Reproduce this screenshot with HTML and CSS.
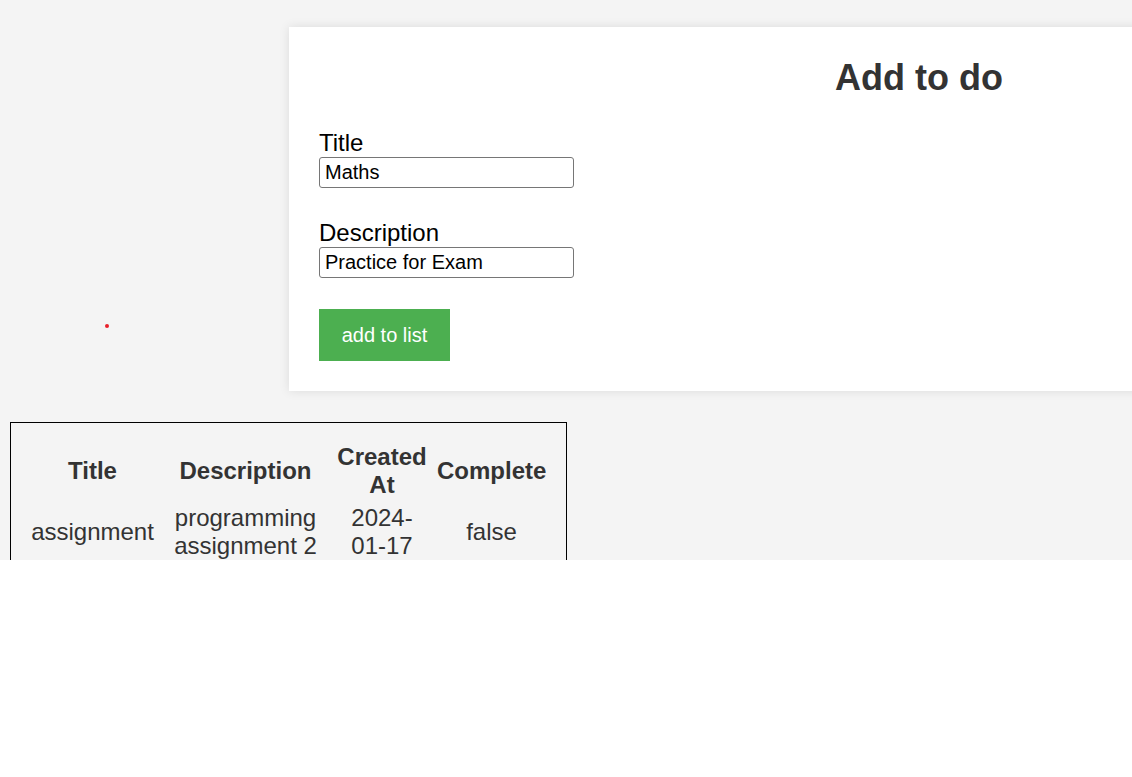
FILE: index.html
```html
<!DOCTYPE html>
<html lang="en">
<head>
<meta charset="utf-8">
<title>Todo</title>
<link rel="stylesheet" href="styles.css">
</head>
<body>
<div class="app">
  <div class="top-row">
    <div class="side">
      <div class="dot"></div>
    </div>
    <div class="card">
      <h1 class="card-title">Add to do</h1>
      <div class="field">
        <label class="field-label" for="title">Title</label>
        <input class="field-input" id="title" type="text" value="Maths">
      </div>
      <div class="field">
        <label class="field-label" for="desc">Description</label>
        <input class="field-input" id="desc" type="text" value="Practice for Exam">
      </div>
      <button class="add-btn" type="button">add to list</button>
    </div>
  </div>
  <table class="todo-table">
    <colgroup>
      <col class="c-title">
      <col class="c-desc">
      <col class="c-created">
      <col class="c-complete">
    </colgroup>
    <thead>
      <tr>
        <th>Title</th>
        <th>Description</th>
        <th>Created At</th>
        <th>Complete</th>
      </tr>
    </thead>
    <tbody>
      <tr>
        <td>assignment</td>
        <td>programming assignment 2</td>
        <td>2024-01-17</td>
        <td>false</td>
      </tr>
    </tbody>
  </table>
</div>
</body>
</html>
```
FILE: styles.css
```css
html, body {
  margin: 0;
  padding: 0;
  background: #ffffff;
}

body {
  font-family: "Liberation Sans", Arial, sans-serif;
}

.app {
  height: 560px;
  overflow: hidden;
  background: #f4f4f4;
  padding: 27px 0 0 10px;
  box-sizing: border-box;
}

.top-row {
  display: flex;
  align-items: flex-start;
}

.side {
  flex: 0 0 279px;
}

.dot {
  width: 4px;
  height: 4px;
  border-radius: 50%;
  background: #e8202a;
  margin: 297px 0 0 95px;
}

.card {
  flex: 0 0 1260px;
  box-sizing: border-box;
  background: #ffffff;
  padding: 30px;
  box-shadow: 0 0 10px rgba(0, 0, 0, 0.1);
}

.card-title {
  margin: 0 0 30px;
  font-size: 36px;
  font-weight: bold;
  color: #333333;
  text-align: center;
}

.field {
  margin-bottom: 31px;
}

.field-label {
  display: block;
  font-size: 24px;
  color: #000000;
}

.field-input {
  display: block;
  box-sizing: border-box;
  width: 255px;
  height: 31px;
  margin: 0;
  padding: 0 5px;
  border: 1px solid #767676;
  border-radius: 3px;
  font-family: "Liberation Sans", Arial, sans-serif;
  font-size: 20px;
  color: #000000;
  background: #ffffff;
}

.add-btn {
  display: block;
  width: 131px;
  height: 52px;
  margin: 0;
  padding: 0;
  border: none;
  background: #4caf50;
  color: #ffffff;
  font-family: "Liberation Sans", Arial, sans-serif;
  font-size: 20px;
}

.todo-table {
  margin-top: 31px;
  table-layout: fixed;
  width: 557px;
  border: 1px solid #000000;
  border-collapse: separate;
  border-spacing: 10px 5px;
  padding: 15px 10px;
  color: #333333;
  font-size: 24px;
}

.c-title { width: 123px; }
.c-desc { width: 163px; }
.c-created { width: 90px; }
.c-complete { width: 109px; }

.todo-table th,
.todo-table td {
  padding: 0;
  text-align: center;
  vertical-align: middle;
}

.todo-table th {
  font-weight: bold;
}
```
